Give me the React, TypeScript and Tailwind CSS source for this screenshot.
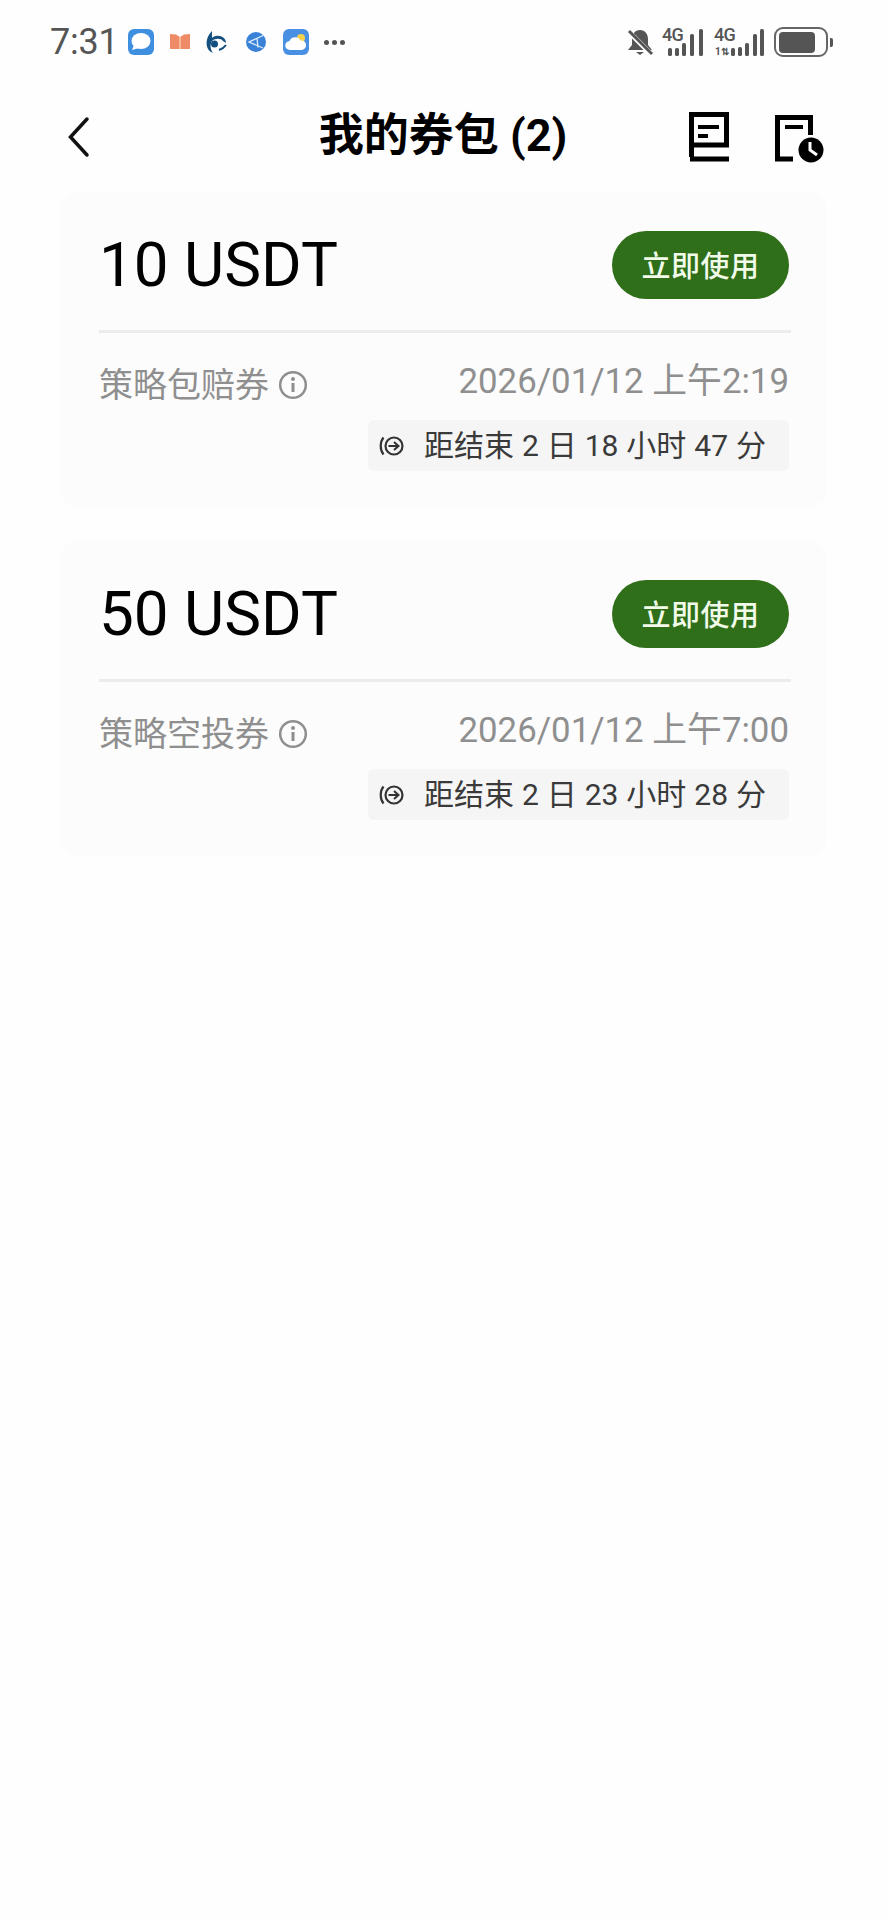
const coupons = [
  { amount: "10 USDT", name: "策略包赔券", date: "2026/01/12 上午2:19", left: "距结束 2 日 18 小时 47 分" },
  { amount: "50 USDT", name: "策略空投券", date: "2026/01/12 上午7:00", left: "距结束 2 日 23 小时 28 分" },
];

function Signal({ bars, sim }: { bars: number[][]; sim?: boolean }) {
  return (
    <div className={sim ? "relative h-[28px] w-[50px]" : "relative h-[28px] w-[41px]"}>
      <svg width={sim ? 50 : 41} height="28" viewBox={sim ? "0 0 50 28" : "0 0 41 28"} className="absolute left-0 top-0">
        {bars.map(([x, h]) => (
          <rect key={x} x={x} y={28 - h} width="4" height={h} rx="1.6" fill="#555" />
        ))}
      </svg>
      <span className="absolute left-0 top-[-2px] text-[18px] font-medium leading-[18px] tracking-[-0.8px] text-[#555] font-['Roboto',sans-serif]">
        4G
      </span>
      {sim ? (
        <span className="absolute bottom-[-1px] left-[1px] text-[10px] font-bold leading-[10px] text-[#555] font-['Roboto',sans-serif]">
          1⇅
        </span>
      ) : null}
    </div>
  );
}

function StatusBar() {
  return (
    <div className="flex h-[82px] items-center justify-between pl-[50px] pr-[53px] pt-[2px]">
      <div className="flex items-center">
        <span className="text-[36px] leading-none tracking-[-0.2px] text-[#555] font-['Roboto',sans-serif]">7:31</span>
        {/* app notification icons */}
        <svg width="26" height="26" viewBox="0 0 26 26" className="ml-[9px]">
          <rect width="26" height="26" rx="6" fill="#3f8fe0" />
          <ellipse cx="13" cy="12" rx="9.500" ry="8" fill="#fff" />
          <path d="M6 16l-2 5 7-2z" fill="#fff" />
        </svg>
        <svg width="20" height="18" viewBox="0 0 20 18" className="ml-[16px]">
          <path d="M0 1l6 .5L10 4l4-2.500L20 1v15H0z" fill="#ef8a66" />
          <path d="M10 4v12" stroke="#f9c7a8" strokeWidth="1.500" />
        </svg>
        <svg width="22" height="24" viewBox="0 0 22 24" className="ml-[15px]">
          <path d="M7 1C2 6 0 13 3 19c1 2 3 3 5 4-3-4-3-9-1-12 3-3 9-3 11 0l3 2c0-5-5-8-10-7-2 .4-3 1-4 2 0-3 0-5 0-7z" fill="#14507f" />
          <circle cx="9.500" cy="14" r="3.500" fill="#14507f" />
          <path d="M14 20c3-1 5-2 7-5" stroke="#14507f" strokeWidth="2" fill="none" />
        </svg>
        <svg width="20" height="20" viewBox="0 0 20 20" className="ml-[19px]">
          <circle cx="10" cy="10" r="10" fill="#3a82d8" />
          <path d="M18 3L3 10l14 6M11 6.500l1 9" stroke="#dcebfb" strokeWidth="1.300" fill="none" />
        </svg>
        <svg width="26" height="26" viewBox="0 0 26 26" className="ml-[17px]">
          <rect width="26" height="26" rx="6" fill="#4a90e2" />
          <circle cx="18" cy="9" r="4" fill="#f5d04c" />
          <path d="M7 21a4.500 4.500 0 0 1-.5-9 6 6 0 0 1 11-.5A4.800 4.800 0 0 1 19 21z" fill="#fff" />
        </svg>
        <span className="ml-[15px] flex gap-[3px]">
          <i className="h-[5px] w-[5px] rounded-full bg-[#555]" />
          <i className="h-[5px] w-[5px] rounded-full bg-[#555]" />
          <i className="h-[5px] w-[5px] rounded-full bg-[#555]" />
        </span>
      </div>
      <div className="flex items-center">
        <svg width="26" height="27" viewBox="0 0 26 27">
          <path d="M13 1c5 0 8 4 8 9v6l4 5H1l4-5v-6c0-5 3-9 8-9z" fill="#555" />
          <path d="M9 23h8l-4 3z" fill="#555" />
          <path d="M2 3l22 22" stroke="#fefefe" strokeWidth="5" />
          <path d="M2 2l23 23" stroke="#555" strokeWidth="3" />
        </svg>
        <div className="ml-[9px]">
          <Signal bars={[[6, 8], [13, 8], [20, 13], [28, 22], [37, 27]]} />
        </div>
        <div className="ml-[11px]">
          <Signal sim bars={[[17, 8], [24, 9], [31, 13], [39, 22], [46, 27]]} />
        </div>
        <div className="ml-[10px] flex h-[30px] w-[54px] items-center rounded-[9px] border-[2px] border-[#666] px-[3px]">
          <div className="h-[21px] w-[36px] rounded-[4px] bg-[#555]" />
        </div>
        <div className="ml-[2px] h-[9px] w-[3px] rounded-r-[2px] bg-[#555]" />
      </div>
    </div>
  );
}

function Header() {
  return (
    <div className="grid h-[106px] grid-cols-[1fr_auto_1fr] items-center">
      <div className="pl-[67px] pt-[4px]">
        <svg width="24" height="42" viewBox="0 0 24 42" fill="none">
          <path d="M20 3L3.500 21 20 39" stroke="#111" strokeWidth="3.500" strokeLinecap="round" />
        </svg>
      </div>
      <h1 className="text-[45px] font-bold leading-none text-black font-['Roboto','Noto_Sans_CJK_SC',sans-serif]">
        我的券包 (2)
      </h1>
      <div className="flex items-center justify-end gap-[46px] pr-[62px] pt-[4px]">
        <svg width="40" height="50" viewBox="0 0 40 50" fill="none">
          <path d="M2.500 45V2.500h35V33H2" stroke="#000" strokeWidth="5" />
          <path d="M1 47h39" stroke="#000" strokeWidth="5" />
          <path d="M9 15h21M9 24h10" stroke="#000" strokeWidth="4" />
        </svg>
        <svg width="49" height="48" viewBox="0 0 49 48" fill="none" className="mt-[3px]">
          <path d="M18 44H2.500V2.500h33V20" stroke="#000" strokeWidth="5" />
          <path d="M10 12h18" stroke="#000" strokeWidth="4" />
          <circle cx="36" cy="35" r="12.500" fill="#000" />
          <path d="M35 27v8l7 5" stroke="#fff" strokeWidth="3" />
        </svg>
      </div>
    </div>
  );
}

function InfoIcon() {
  return (
    <svg width="30" height="30" viewBox="0 0 30 30" fill="none">
      <circle cx="15" cy="15" r="12.800" stroke="#8f8f8f" strokeWidth="2.500" />
      <circle cx="15" cy="9" r="2" fill="#8f8f8f" />
      <path d="M15 13v9" stroke="#8f8f8f" strokeWidth="3" />
    </svg>
  );
}

function TimerIcon() {
  return (
    <svg width="25" height="20" viewBox="0 0 25 20" fill="none">
      <path d="M4.500 1.500C.8 6 .8 14 4.500 18.500" stroke="#333" strokeWidth="2.200" />
      <circle cx="15" cy="10" r="8.500" stroke="#333" strokeWidth="2.200" />
      <path d="M9.500 10h10M15 6l4.500 4-4.500 4" stroke="#333" strokeWidth="2" />
    </svg>
  );
}

function CouponCard({ amount, name, date, left }: (typeof coupons)[number]) {
  return (
    <div className="rounded-[18px] bg-[#fcfcfc] pb-[36px] pl-[39px] pr-[38px] pt-[39px]">
      <div className="-mr-[2px] flex items-center justify-between border-b-[3px] border-[#ececec] pb-[31px] pr-[2px]">
        <span className="text-[62px] leading-[68px] text-black font-['Roboto','Noto_Sans_CJK_SC',sans-serif]">
          {amount}
        </span>
        <button className="flex h-[68px] w-[177px] items-center justify-center rounded-full bg-[#2f6f19] text-[29px] font-medium tracking-[0.5px] text-[#f2fbe9] font-['Noto_Sans_CJK_SC',sans-serif]">
          立即使用
        </button>
      </div>
      <div className="mt-[25px] flex items-start justify-between text-[34px] leading-[46px] text-[#8f8f8f] font-['Roboto','Noto_Sans_CJK_SC',sans-serif]">
        <div className="mt-[4px] flex items-center gap-[9px]">
          <span>{name}</span>
          <InfoIcon />
        </div>
        <span className="text-[34.8px]">{date}</span>
      </div>
      <div className="mt-[12px] flex justify-end">
        <div className="flex h-[51px] w-[421px] items-center rounded-[6px] bg-[#f5f5f5] pl-[11px] text-[30px] text-[#3a3a3a] font-['Roboto','Noto_Sans_CJK_SC',sans-serif]">
          <TimerIcon />
          <span className="ml-[20px] whitespace-nowrap [word-spacing:0.5px]">{left}</span>
        </div>
      </div>
    </div>
  );
}

export default function App() {
  return (
    <div className="h-[1920px] w-[886px] overflow-hidden bg-[#fefefe]">
      <StatusBar />
      <Header />
      <div className="mt-[4px] flex flex-col gap-[34px] pl-[60px] pr-[59px]">
        {coupons.map((c) => (
          <CouponCard key={c.amount} {...c} />
        ))}
      </div>
    </div>
  );
}
